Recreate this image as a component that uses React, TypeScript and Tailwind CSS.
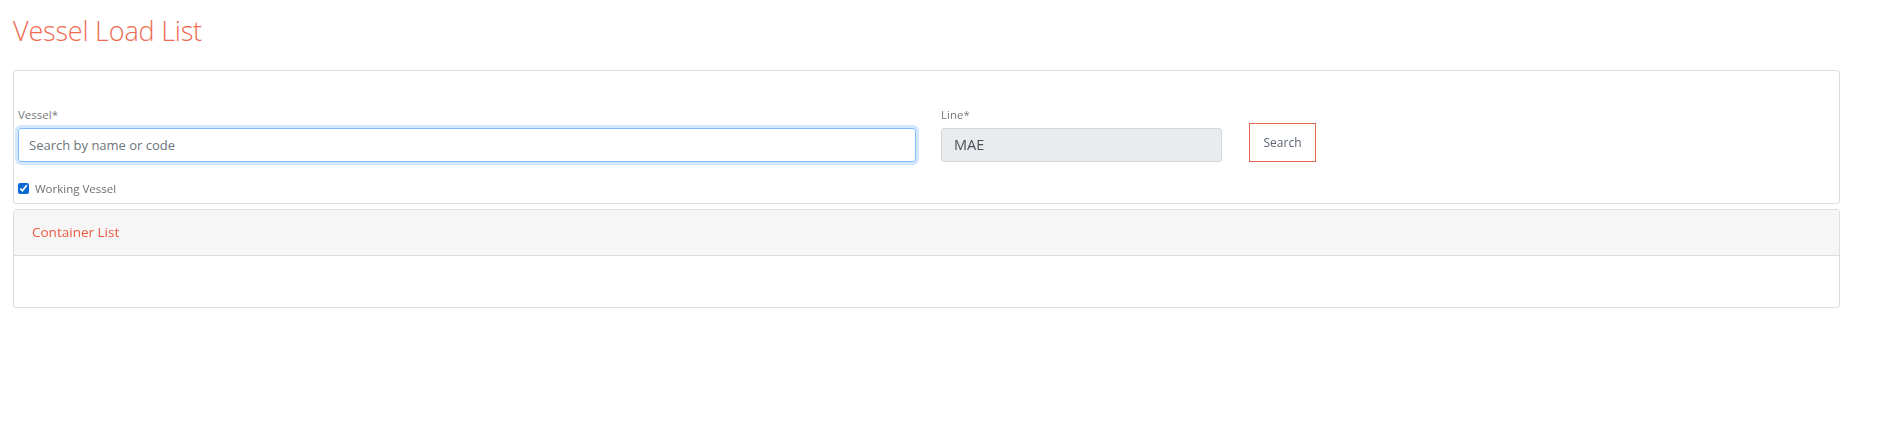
export default function App() {
  return (
    <div className="min-h-screen bg-white pl-[13px] pr-[51px] pt-[14px] font-['Open_Sans',sans-serif]">
      <h1 className="text-[27px] font-light leading-[34px] text-[#ee6b52] tracking-[-0.2px]">Vessel Load List</h1>

      {/* Filters */}
      <div className="mt-[22px] h-[134px] rounded-[3px] border border-[#dedede] px-[4px] pt-[36px]">
        <div className="flex items-start">
          <div className="w-[898px]">
            <label className="block text-[11.5px] leading-[16px] text-[#7a7a7a]">Vessel*</label>
            <input
              autoFocus
              placeholder="Search by name or code"
              className="mt-[5px] h-[34px] w-full rounded-[3px] border border-[#80bdff] px-[10px] text-[13px] text-[#495057] outline-none shadow-[0_0_0_3px_rgba(128,189,255,0.35)] placeholder:text-[#6c757d]"
            />
            <label className="mt-[18px] flex items-center gap-[6px] text-[11.5px] text-[#6f6f6f]">
              <input type="checkbox" defaultChecked className="h-[11px] w-[11px] accent-[#0b6bd6]" />
              Working Vessel
            </label>
          </div>
          <div className="ml-[25px] w-[281px]">
            <label className="block text-[11.5px] leading-[16px] text-[#7a7a7a]">Line*</label>
            <div className="mt-[5px] flex h-[34px] items-center rounded-[3px] border border-[#d4d7da] bg-[#e9ecef] px-[12px] text-[14.5px] text-[#495057]">
              MAE
            </div>
          </div>
          <button className="ml-[27px] mt-[16px] h-[39px] w-[67px] border border-[#e0684f] bg-white text-[12px] text-[#5b6470]">
            Search
          </button>
        </div>
      </div>

      {/* Container list */}
      <div className="mt-[5px] rounded-[3px] border border-[#dedede]">
        <div className="flex h-[46px] items-center border-b border-[#dcdcdc] bg-[#f6f6f6] px-[18px] text-[13.5px] text-[#ee5a40]">
          Container List
        </div>
        <div className="h-[51px]" />
      </div>
    </div>
  );
}
